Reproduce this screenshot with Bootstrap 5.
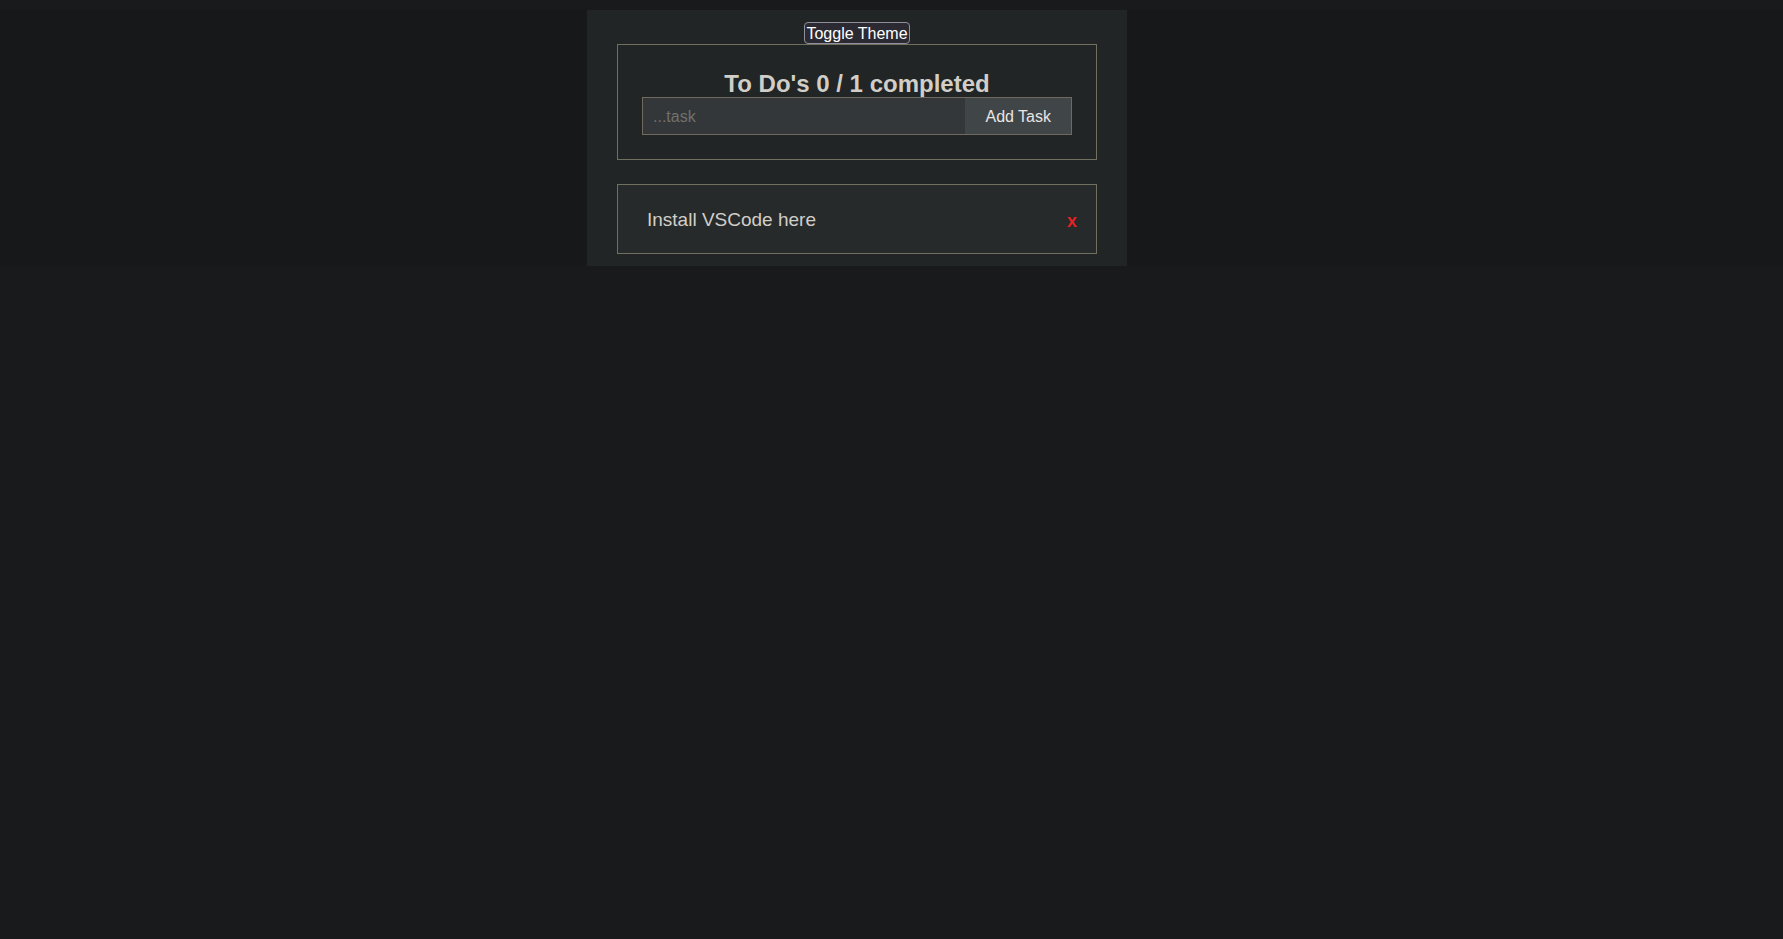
<!DOCTYPE html>
<html lang="en" data-bs-theme="dark">
<head>
<meta charset="utf-8">
<meta name="viewport" content="width=device-width, initial-scale=1">
<title>To Do's</title>
<link href="https://cdn.jsdelivr.net/npm/bootstrap@5.3.0/dist/css/bootstrap.min.css" rel="stylesheet">
<style>
  body { background: #181a1b; color: #d1cec8; font-family: "Liberation Sans", Arial, sans-serif; font-size: 16px; }
  .band { background: #161819; margin-top: 10px; padding-right: 69px; }
  .todo-panel { background: #212525; width: 540px; max-width: 100%; padding: 12px 30px; }
  .theme-toggle { background: #2b2a33; color: #fff; border: 1px solid #8f8f9d; border-radius: 4px; padding: 2px 1px 0; line-height: 18px; }
  .framed { border: 1px solid #706f60; }
  .todo-head { padding: 24px; margin-bottom: 24px; }
  .todo-title { color: #d1cec8; font-size: 24px; line-height: 26px; font-weight: 700; padding-top: 2px; }
  .todo-form { border: 1px solid #706a5e; }
  .task-input { background: #33373a; color: #e8e6e3; border: 0; border-radius: 0; padding: 7px 10px 5px; line-height: 24px; }
  .task-input:focus { background: #33373a; }
  .task-input::placeholder { color: #72706b; }
  .add-task { background: #404547; color: #e8e6e3; border: 0; border-radius: 0; padding: 7px 20px 5px; line-height: 24px; }
  .todo-item { background: #272a2a; padding: 23px 19px 21px 29px; }
  .task-name { font-size: 19px; line-height: 24px; }
  .remove { color: #ed2024; font-family: "Open Sans", sans-serif; font-size: 18px; font-weight: 600; line-height: 24px; }
</style>
</head>
<body>
<main class="band d-flex justify-content-center">
  <section class="todo-panel">
    <div class="d-flex justify-content-center">
      <button type="button" class="theme-toggle">Toggle Theme</button>
    </div>
    <div class="todo-head framed">
      <h1 class="todo-title text-center mb-0">To Do's 0 / 1 completed</h1>
      <form class="todo-form d-flex" onsubmit="return false">
        <input type="text" class="task-input form-control shadow-none" placeholder="...task" aria-label="Task">
        <button type="submit" class="add-task flex-shrink-0">Add Task</button>
      </form>
    </div>
    <ul class="list-unstyled mb-0">
      <li class="todo-item framed d-flex align-items-center justify-content-between">
        <span class="task-name">Install VSCode here</span>
        <button type="button" class="remove border-0 bg-transparent p-0" aria-label="Remove task">x</button>
      </li>
    </ul>
  </section>
</main>
<script src="https://cdn.jsdelivr.net/npm/bootstrap@5.3.0/dist/js/bootstrap.bundle.min.js"></script>
</body>
</html>
